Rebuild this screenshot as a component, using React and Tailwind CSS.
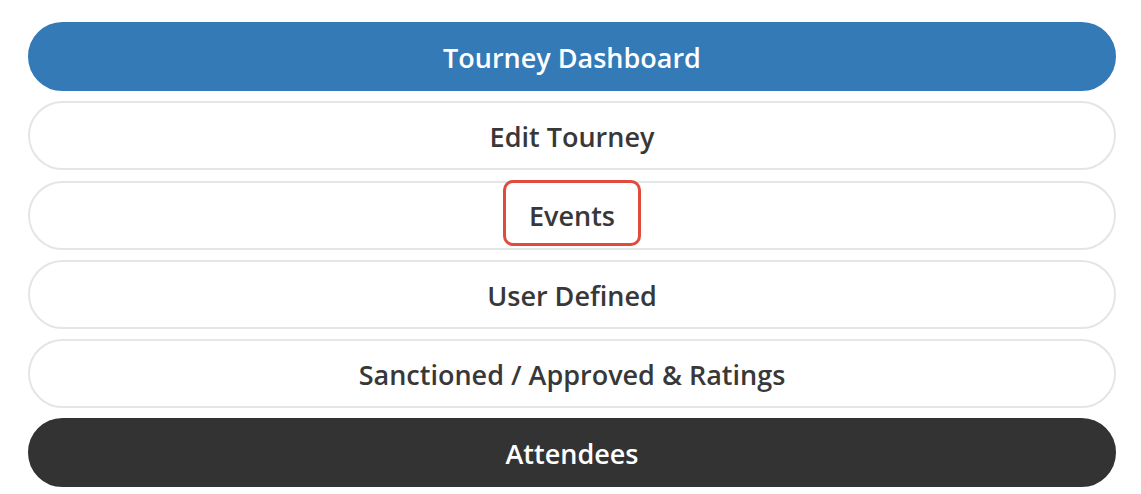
import React from 'react';

const items = [
  { label: 'Tourney Dashboard', variant: 'primary' },
  { label: 'Edit Tourney' },
  { label: 'Events', marked: true },
  { label: 'User Defined' },
  { label: 'Sanctioned / Approved & Ratings' },
  { label: 'Attendees', variant: 'dark' },
];

const styles = {
  primary: 'bg-[#337ab7] border-[#337ab7] text-white font-semibold',
  dark: 'bg-[#333333] border-[#333333] text-white font-semibold',
  default: 'bg-white border-[#e3e5e8] text-[#383838] font-semibold',
};

export default function App() {
  return (
    <div className="w-[1141px] h-[494px] bg-white pl-[28px] pr-[25px] pt-[22px] flex flex-col gap-[10.25px] font-['Open_Sans','Noto_Sans',sans-serif]">
      {items.map((item) => (
        <div
          key={item.label}
          className={`relative h-[69px] rounded-full border-2 flex items-center justify-center pt-[3px] text-[27px] ${styles[item.variant || 'default']}`}
        >
          <span>{item.label}</span>
          {item.marked && (
            <div className="absolute top-[-3px] left-1/2 -translate-x-1/2 w-[138px] h-[66px] rounded-[10px] border-[3px] border-[#e14b3b]" />
          )}
        </div>
      ))}
    </div>
  );
}
